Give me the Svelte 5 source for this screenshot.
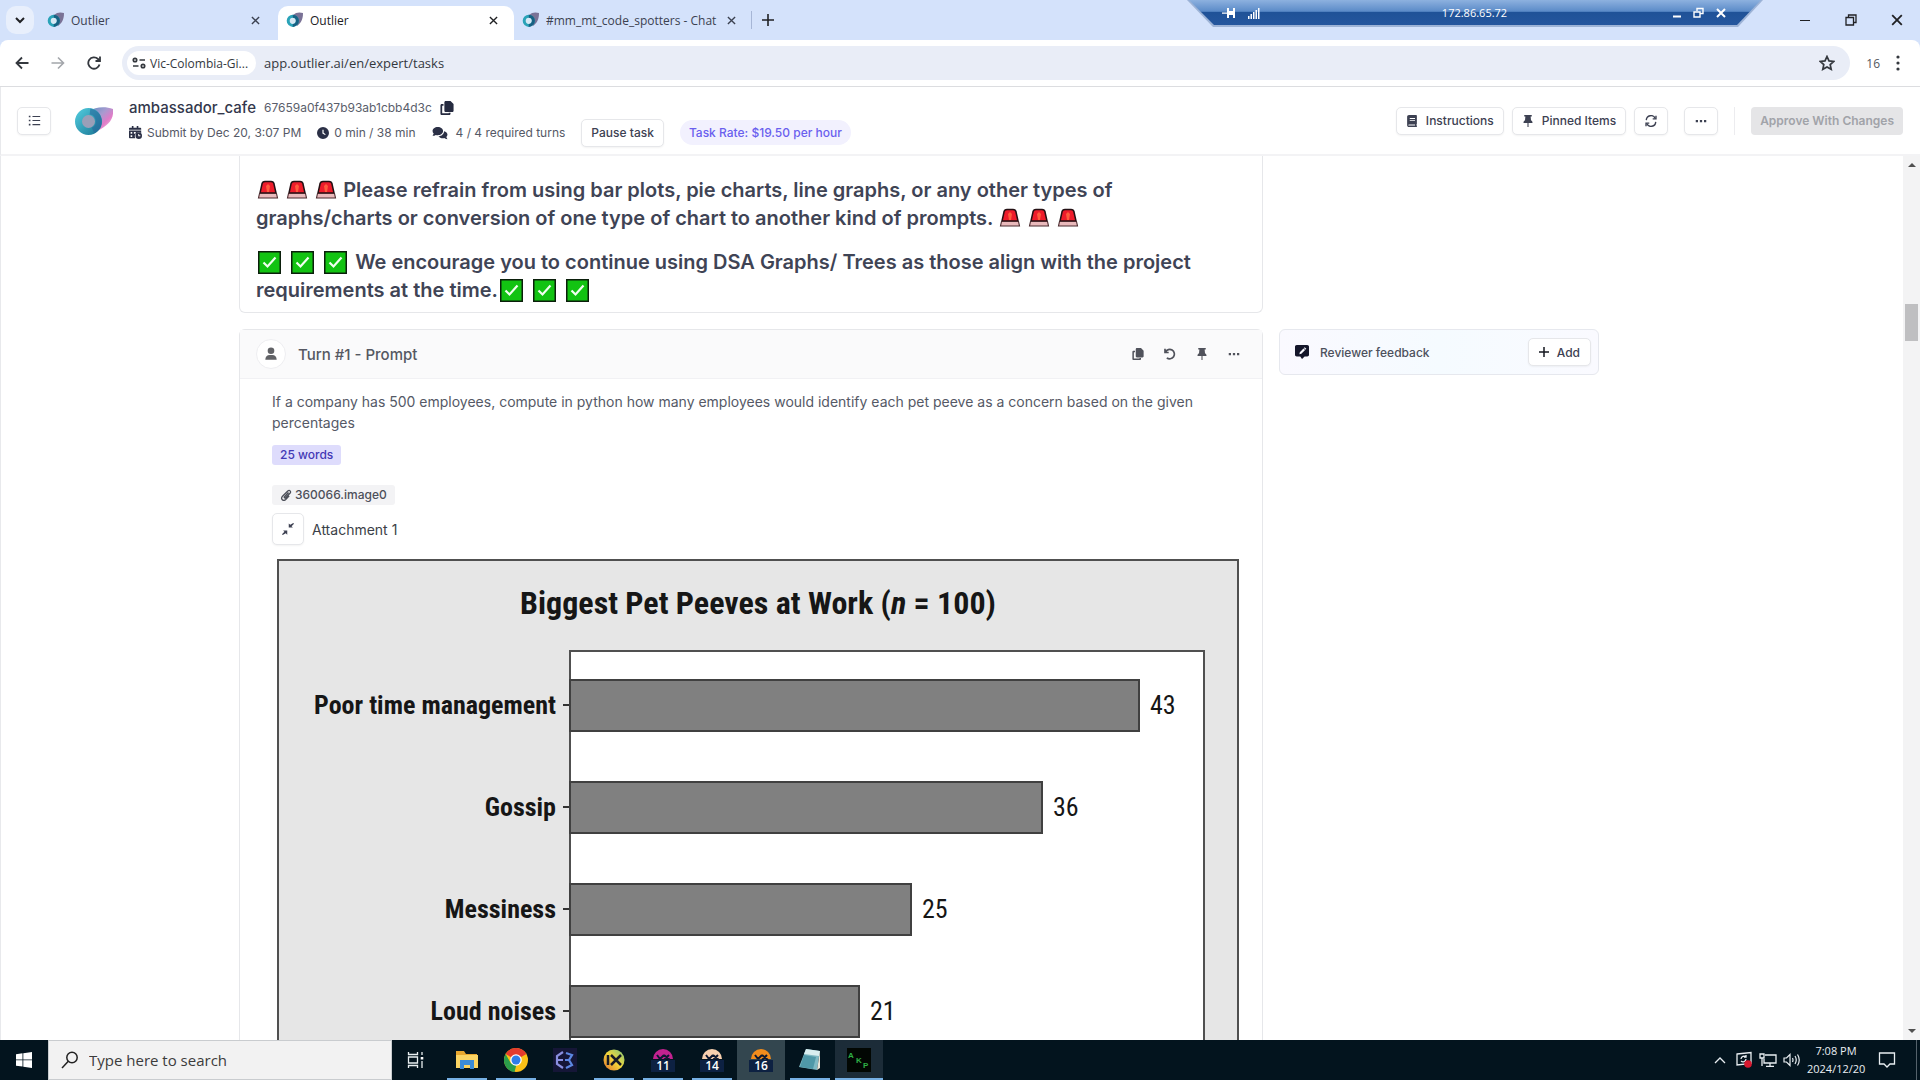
<script>
  const tabs = [
    { title: 'Outlier', active: false },
    { title: 'Outlier', active: true },
    { title: '#mm_mt_code_spotters - Chat', active: false }
  ];

  const bars = [
    { label: 'Poor time management', value: 43, y: 121, width: 569 },
    { label: 'Gossip', value: 36, y: 223, width: 472 },
    { label: 'Messiness', value: 25, y: 325, width: 341 },
    { label: 'Loud noises', value: 21, y: 427, width: 289 }
  ];

  const sessions = [
    { n: 11, color: '#c2228f', current: false },
    { n: 14, color: '#f7cfae', current: false },
    { n: 16, color: '#f28c1c', current: true }
  ];

  const paths = {
    list: 'M1 2h2v2H1zM5.500 2.400h9.500v1.300H5.500zM1 7h2v2H1zM5.500 7.400h9.500v1.300H5.500zM1 12h2v2H1zM5.500 12.400h9.500v1.300H5.500z',
    copy: 'M6.500 0H12l3.500 3.500V11c0 .8-.7 1.500-1.500 1.500H6.500C5.700 12.500 5 11.800 5 11V1.500C5 .7 5.700 0 6.500 0zM2 3.500h2v2H2.500v8.500H10v-.7h2V14.500c0 .8-.7 1.500-1.500 1.500H2c-.8 0-1.500-.7-1.500-1.500V5c0-.8.7-1.500 1.500-1.500z',
    pin: 'M3 0h10v2h-1.500l.5 5c1.300.8 2 1.900 2 3.500H2C2 8.900 2.700 7.800 4 7l.5-5H3zM7.300 10.500h1.400V16H7.300z',
    book: 'M4 0h9.500c.6 0 1 .4 1 1v10.500c0 .4-.2.700-.5.900V14h.5v2H4c-1.500 0-2.500-1-2.500-2.500v-11C1.500 1 2.500 0 4 0zm0 12.500c-1.200 0-1.200 1.500 0 1.500h8v-1.500zM5 4v1.200h7V4zm0 2.500v1.200h7V6.500z',
    user: 'M8 0.500a3.800 3.800 0 1 1 0 7.600 3.800 3.800 0 0 1 0-7.600zM6.500 9h3c3 0 5 2.200 5 5.500H1.500C1.500 11.200 3.500 9 6.500 9z',
    dots: 'M1 6.500h3v3H1zM6.500 6.500h3v3h-3zM12 6.500h3v3h-3z',
    clock: 'M8 0a8 8 0 1 1 0 16A8 8 0 0 1 8 0zM7.200 3.500v5l3.500 2.300.9-1.200-2.800-1.900V3.500z',
    chat: 'M6.500 1C3 1 .5 3 .5 5.700c0 1.200.5 2.200 1.300 3L.5 11.200c1.500 0 2.800-.4 3.700-1 .7.200 1.500.3 2.300.3 3.400 0 6-2.100 6-4.800S9.900 1 6.500 1zM13.600 6c0 3.300-3 5.600-6.400 5.800 1 1.500 3 2.300 5 2.300.6 0 1.200-.1 1.800-.3.8.7 2 1.200 3.500 1.200l-1.300-2.400c.7-.8 1.300-1.700 1.300-2.800 0-1.700-1.500-3.200-3.900-3.800z',
    calendar: 'M3.500 0h2v2h4V0h2v2H14c.6 0 1 .4 1 1v1.500H0V3c0-.6.4-1 1-1h2.500zM0 5.500h15v3.200A5 5 0 0 0 7.700 15H1c-.6 0-1-.4-1-1zM2 7.500v2h2v-2zm4 0v2h1.500l.8-1V7.500zm-4 4v2h2v-2zM12 8a4 4 0 1 1 0 8 4 4 0 0 1 0-8zm-.6 1.700v2.800H14v-1.100h-1.500V9.700z',
    collapse: 'M15 0l1 1-3.200 3.200L14.500 6H9V.5l2 1.700zM1 16l-1-1 3.200-3.200L1.500 10H7v5.500l-2-1.700z',
    feedback: 'M2 0h12c1.100 0 2 .9 2 2v9c0 1.100-.9 2-2 2h-3l-3 3-2-3H2c-1.100 0-2-.9-2-2V2C0 .9.900 0 2 0zm3.500 8.200L5 10.500l2.300-.5 4.200-4.200-1.800-1.800zm4.700-4.700 1.800 1.800.9-.9-1.800-1.800z'
  };
</script>

{#snippet icon(name, size)}
  <svg width={size} height={size} viewBox="0 0 16 16" fill="currentColor" fill-rule="evenodd" aria-hidden="true"><path d={paths[name]} /></svg>
{/snippet}

{#snippet favicon()}
  <svg width="17" height="16" viewBox="0 0 17 16" aria-hidden="true">
    <path d="M7 3C10 0 14 0 17 1c0 6-2 10-6 13z" fill="#7a7296" />
    <circle cx="6.800" cy="8.800" r="4.600" fill="#d7e8f4" stroke="#2aa3b8" stroke-width="3" />
    <path d="M6.800 4.200a4.600 4.600 0 0 1 0 9.200" fill="none" stroke="#176183" stroke-width="3" />
  </svg>
{/snippet}

{#snippet cross(size)}
  <svg width={size} height={size} viewBox="0 0 10 10" fill="none" stroke="currentColor" stroke-width="1.500" aria-hidden="true"><path d="M1 1l8 8M9 1L1 9" /></svg>
{/snippet}

{#snippet siren()}
  <svg class="siren" width="24" height="20" viewBox="0 0 24 20" role="img" aria-label="siren">
    <path d="M6 4Q6.400 1.500 9 1.500h6Q17.600 1.500 18 4l2 9H4z" fill="#ee1c2b" stroke="#241014" stroke-width="1.500" />
    <path d="M10 6l2-2 2 2-1 6h-2z" fill="#ff5b3d" />
    <path d="M3.500 13.500h17l1 4.500h-19z" fill="#e9b9bb" stroke="#4a2a2e" stroke-width="1.100" />
  </svg>
{/snippet}

{#snippet check()}
  <svg class="check" width="28" height="23" viewBox="0 0 28 23" role="img" aria-label="check">
    <rect x="2.750" y=".75" width="21.500" height="21.500" fill="#12c312" stroke="#0b1f0b" stroke-width="1.500" />
    <path d="M7.500 11.500l4 4 8-9" fill="none" stroke="#f1fff0" stroke-width="2.200" />
  </svg>
{/snippet}

<div class="screen">
  <header class="browser">
    <div class="tabstrip">
      <button class="tabmenu" aria-label="Search tabs">
        <svg width="10" height="7" viewBox="0 0 10 7" fill="none" stroke="currentColor" stroke-width="2"><path d="M1 1l4 4 4-4" /></svg>
      </button>
      {#each tabs as tab}
        <div class="tab" class:active={tab.active}>
          {@render favicon()}
          <span class="tabtitle">{tab.title}</span>
          <button class="plain" aria-label="Close tab">{@render cross(9)}</button>
        </div>
      {/each}
      <span class="tabsep"></span>
      <button class="plain newtab" aria-label="New tab">
        <svg width="12" height="12" viewBox="0 0 12 12" stroke="currentColor" stroke-width="1.600"><path d="M6 0v12M0 6h12" /></svg>
      </button>
      <div class="winctl">
        <button class="plain" aria-label="Minimize"><svg width="12" height="12" viewBox="0 0 12 12" stroke="currentColor"><path d="M1 6.500h10" /></svg></button>
        <button class="plain" aria-label="Restore"><svg width="12" height="12" viewBox="0 0 12 12" fill="none" stroke="currentColor" stroke-width="1.300"><path d="M1 3.500h7.500V11H1zM3.500 3.500V1H11v7.500H8.500" /></svg></button>
        <button class="plain" aria-label="Close">{@render cross(12)}</button>
      </div>
    </div>

    <div class="toolbar">
      <button class="plain" aria-label="Back"><svg width="14" height="14" viewBox="0 0 14 14" fill="none" stroke="currentColor" stroke-width="1.800"><path d="M13.500 7H1.500M7 1.500L1.500 7 7 12.500" /></svg></button>
      <button class="plain faded" aria-label="Forward"><svg width="14" height="14" viewBox="0 0 14 14" fill="none" stroke="currentColor" stroke-width="1.600"><path d="M.5 7h12M7 1.500L12.500 7 7 12.500" /></svg></button>
      <button class="plain" aria-label="Reload"><svg width="14" height="14" viewBox="0 0 14 14" fill="none" stroke="currentColor" stroke-width="1.800"><path d="M12.500 8.500A5.700 5.700 0 1 1 11 3L12.500 4.500" /><path d="M13 .5v4.500H8.500" /></svg></button>
      <div class="urlbar">
        <button class="chip">
          <svg width="14" height="12" viewBox="0 0 14 12" fill="none" stroke="currentColor" stroke-width="1.700"><circle cx="3" cy="3" r="1.700" /><path d="M7.500 3H13M1 9h5.500" /><circle cx="11" cy="9" r="1.700" /></svg>
          Vic-Colombia-Gi...
        </button>
        <input class="url" aria-label="Address" value="app.outlier.ai/en/expert/tasks" />
        <button class="plain" aria-label="Bookmark"><svg width="16" height="16" viewBox="0 0 16 16" fill="none" stroke="currentColor" stroke-width="1.700"><path d="M8 1.500l2 4.400 4.800.5-3.600 3.200 1 4.700L8 11.900l-4.200 2.400 1-4.700L1.200 6.400 6 5.900z" /></svg></button>
      </div>
      <span class="profile">16</span>
      <button class="plain" aria-label="Browser menu"><svg width="4" height="16" viewBox="0 0 4 16" fill="currentColor"><circle cx="2" cy="2" r="1.600" /><circle cx="2" cy="8" r="1.600" /><circle cx="2" cy="14" r="1.600" /></svg></button>
    </div>

    <div class="remote">
      <div class="remoteinner">
        <svg width="14" height="12" viewBox="0 0 14 12" fill="currentColor"><path d="M0 5.500h5V1h2v3h4V1h2v10h-2V8H7v3H5V6.700H0z" /></svg>
        <svg width="12" height="12" viewBox="0 0 12 12" fill="currentColor"><path d="M0 9h1.500v3H0zM2.500 7H4v5H2.500zM5 5h1.500v7H5zM7.500 3H9v9H7.500zM10 1h1.500v11H10z" /></svg>
        <span class="ip">172.86.65.72</span>
        <svg width="8" height="12" viewBox="0 0 8 12" fill="currentColor"><path d="M0 8.500h8v2H0z" /></svg>
        <svg width="11" height="12" viewBox="0 0 11 12" fill="none" stroke="currentColor" stroke-width="1.400"><path d="M1 5h6v5H1zM4 4V1.500h6v5H7.500" /></svg>
        <svg width="10" height="10" viewBox="0 0 10 10" fill="none" stroke="currentColor" stroke-width="2"><path d="M1 1l8 8M9 1L1 9" /></svg>
      </div>
    </div>
  </header>

  <section class="taskhead">
    <button class="btn square" aria-label="Task list">{@render icon('list', 13)}</button>
    <svg class="logo" width="38" height="30" viewBox="0 0 38 30" aria-hidden="true">
      <defs>
        <linearGradient id="wing" x1="0" y1="0" x2="1" y2="1"><stop offset="0" stop-color="#5f8fc0" /><stop offset=".4" stop-color="#a79bd0" /><stop offset=".65" stop-color="#e07cc8" /><stop offset="1" stop-color="#f6d3e6" /></linearGradient>
        <linearGradient id="ring" x1="0" y1="0" x2="1" y2="1"><stop offset="0" stop-color="#4cc3d6" /><stop offset="1" stop-color="#1f7f9c" /></linearGradient>
      </defs>
      <path d="M14 5C20 1 30 0 38 3c1 10-4 16-16 22z" fill="url(#wing)" />
      <circle cx="13.500" cy="15.500" r="10" fill="#9a9fb8" stroke="url(#ring)" stroke-width="7" />
      <path d="M15 5.500a10 10 0 0 1 3 19" fill="none" stroke="#28659a" stroke-width="6" opacity=".55" />
    </svg>
    <div class="taskinfo">
      <div class="line">
        <h1>ambassador_cafe</h1>
        <span class="taskid">67659a0f437b93ab1cbb4d3c</span>
        <button class="plain dark" aria-label="Copy task id">{@render icon('copy', 14)}</button>
      </div>
      <div class="line second">
        <span class="meta">{@render icon('calendar', 13)} Submit by Dec 20, 3:07 PM</span>
        <span class="meta">{@render icon('clock', 12)} 0 min / 38 min</span>
        <span class="meta turns"><svg width="16" height="14" viewBox="0 0 18 16" fill="currentColor"><path d={paths.chat} /></svg> 4 / 4 required turns</span>
        <button class="btn">Pause task</button>
        <span class="rate">Task Rate: $19.50 per hour</span>
      </div>
    </div>
    <div class="actions">
      <button class="btn">{@render icon('book', 12)} Instructions</button>
      <button class="btn">{@render icon('pin', 12)} Pinned Items</button>
      <button class="btn square" aria-label="Refresh">
        <svg width="12" height="12" viewBox="0 0 14 14" fill="none" stroke="currentColor" stroke-width="1.600"><path d="M1.500 6A5.500 5.500 0 0 1 12 4M12.500 8A5.500 5.500 0 0 1 2 10" /><path d="M12.800.8v3.700H9M1.200 13.200V9.500H5" /></svg>
      </button>
      <button class="btn square more" aria-label="More">{@render icon('dots', 12)}</button>
      <span class="vline"></span>
      <button class="approve" disabled>Approve With Changes</button>
    </div>
  </section>

  <main>
    <div class="content">
      <div class="feed">
        <article class="card notice">
          <p>{@render siren()} {@render siren()} {@render siren()} Please refrain from using bar plots, pie charts, line graphs, or any other types of graphs/charts or conversion of one type of chart to another kind of prompts. {@render siren()} {@render siren()} {@render siren()}</p>
          <p>{@render check()} {@render check()} {@render check()} We encourage you to continue using DSA Graphs/ Trees as those align with the project requirements at the time.{@render check()} {@render check()} {@render check()}</p>
        </article>

        <article class="card turn">
          <header class="turnhead">
            <span class="avatar">{@render icon('user', 14)}</span>
            <h2>Turn #1 - Prompt</h2>
            <div class="tools">
              <button class="plain" aria-label="Copy">{@render icon('copy', 12)}</button>
              <button class="plain" aria-label="Undo"><svg width="12" height="12" viewBox="0 0 12 12" fill="none" stroke="currentColor" stroke-width="1.700"><path d="M1 .8v3.700h3.700M1.500 4A4.700 4.700 0 1 1 2.800 9.800" /></svg></button>
              <button class="plain" aria-label="Pin">{@render icon('pin', 12)}</button>
              <button class="plain" aria-label="More">{@render icon('dots', 12)}</button>
            </div>
          </header>
          <div class="turnbody">
            <p class="prompt">If a company has 500 employees, compute in python how many employees would identify each pet peeve as a concern based on the given percentages</p>
            <span class="words">25 words</span>
            <a class="file" href="#attachment">
              <svg width="12" height="12" viewBox="0 0 12 12" fill="none" stroke="currentColor" stroke-width="1.300"><path d="M8.500 3.500L4.500 7.700c-.7.800.3 1.800 1.100 1l4.300-4.400C11.500 2.500 9.500.4 7.800 2L2.500 7.300c-2.300 2.500.7 5.500 3.200 3.200l3.500-3.600" /></svg>
              360066.image0
            </a>
            <div class="attach">
              <button class="btn fold" aria-label="Collapse attachment">{@render icon('collapse', 12)}</button>
              <span>Attachment 1</span>
            </div>
            <svg class="chart" id="attachment" viewBox="0 0 964 620" role="img" aria-label="Biggest Pet Peeves at Work">
              <rect x="2" y="2" width="960" height="640" fill="#e6e6e6" stroke="#505050" stroke-width="2" />
              <text class="charttitle" x="482" y="56" text-anchor="middle">Biggest Pet Peeves at Work (<tspan class="ital">n</tspan> = 100)</text>
              <rect x="294" y="93" width="634" height="600" fill="#fff" stroke="#505050" stroke-width="2" />
              {#each bars as bar}
                <text class="barlabel" x="280" y={bar.y + 35} text-anchor="end">{bar.label}</text>
                <path d="M287 {bar.y + 26}h7" stroke="#333" stroke-width="2" />
                <rect x="294" y={bar.y + 1} width={bar.width} height="51" fill="#808080" stroke="#404040" stroke-width="2" />
                <text class="barvalue" x={bar.width + 305} y={bar.y + 35}>{bar.value}</text>
              {/each}
            </svg>
          </div>
        </article>
      </div>

      <aside class="feedback">
        {@render icon('feedback', 14)}
        <span class="fbtext">Reviewer feedback</span>
        <button class="btn add"><svg width="10" height="10" viewBox="0 0 10 10" stroke="#15171f" stroke-width="1.500"><path d="M5 0v10M0 5h10" /></svg> Add</button>
      </aside>
    </div>
    <div class="scrollbar">
      <svg width="8" height="5" viewBox="0 0 8 5"><path d="M0 5l4-4 4 4z" fill="#505050" /></svg>
      <span class="thumb"></span>
      <svg width="8" height="5" viewBox="0 0 8 5"><path d="M0 0l4 4 4-4z" fill="#505050" /></svg>
    </div>
  </main>

  <footer class="taskbar">
    <button class="start" aria-label="Start"><svg width="16" height="16" viewBox="0 0 16 16" fill="#fff"><path d="M0 2.200L6.500 1.300v6.200H0zM7.300 1.200L16 0v7.500H7.300zM0 8.300h6.500v6.300L0 13.700zM7.300 8.300H16V16l-8.700-1.200z" /></svg></button>
    <label class="search">
      <svg width="18" height="18" viewBox="0 0 18 18" fill="none" stroke="#222" stroke-width="1.500"><circle cx="11" cy="6.500" r="5.200" /><path d="M7.300 10.200L1 17" /></svg>
      <input aria-label="Search" placeholder="Type here to search" />
    </label>
    <div class="apps">
      <button class="app" aria-label="Task view"><svg width="18" height="18" viewBox="0 0 18 18" fill="none" stroke="#e8eef0" stroke-width="1.300"><path d="M1.500 1v2.500h9V1M1.500 17v-2.500h9V17M1.500 6h9v6h-9zM15 1v3M15 10v7" /><path d="M13.700 6h2.600v2.500h-2.600z" fill="#fff" stroke="none" /></svg></button>
      <button class="app run" aria-label="File Explorer"><svg width="24" height="22" viewBox="0 0 24 22"><path d="M1 2h8l2 3h11v14H1z" fill="#e8a72f" /><path d="M1 6h22v13H1z" fill="#fbd463" /><path d="M5 11h14v9h-4v-4H9v4H5z" fill="#3b8bd8" /></svg></button>
      <button class="app run" aria-label="Chrome"><svg width="24" height="24" viewBox="0 0 24 24"><circle cx="12" cy="12" r="12" fill="#fbc116" /><path d="M12 12L1.600 6A12 12 0 0 1 22.400 6z" fill="#e33b2e" /><path d="M1.600 6L7 15.500l5.500 1L10.500 24A12 12 0 0 1 1.600 6z" fill="#2a9d4a" /><circle cx="12" cy="12" r="5.800" fill="#fff" /><circle cx="12" cy="12" r="4.500" fill="#2f7de9" /></svg></button>
      <button class="app" aria-label="EB"><svg width="24" height="24" viewBox="0 0 24 24" fill="none"><path d="M0 0h24v24H0z" fill="#151637" /><path d="M10 4L4 8v8l6 4M4 12h6" stroke="#8a8fe0" stroke-width="2.200" /><path d="M13 5l6 2-3 5 3 5-6 3M12 12h5" stroke="#5c87e2" stroke-width="2.200" /></svg></button>
      <button class="app run" aria-label="IX"><svg width="22" height="22" viewBox="0 0 22 22" fill="none"><defs><linearGradient id="ix" x1="0" y1="1" x2="1" y2="0"><stop offset="0" stop-color="#e0702d" /><stop offset=".5" stop-color="#f3d63b" /><stop offset="1" stop-color="#7cc67c" /></linearGradient></defs><circle cx="11" cy="11" r="10.500" fill="url(#ix)" /><path d="M5 6v10M8 6l10 10M18 6L8 16" stroke="#171a26" stroke-width="2.500" /></svg></button>
      {#each sessions as session}
        <button class="app run" class:current={session.current} aria-label="Session {session.n}"><svg width="24" height="24" viewBox="0 0 24 24"><path d="M2 11a10 10 0 0 1 20 0z" fill={session.color} /><path d="M6 7l3 4M9 11l4-4M13 7l6 5M18 7l-5 5" stroke="#0b1730" stroke-width="2" /><path d="M0 12h24v12H0z" fill="#0d2142" /><text class="num" x="12" y="22" text-anchor="middle">{session.n}</text></svg></button>
      {/each}
      <button class="app run" aria-label="Notepad"><svg width="24" height="24" viewBox="0 0 24 24"><path d="M8 1l14 2-3 19L1 19z" fill="#7fb9c4" /><path d="M8 1l14 2-1 5L6 6z" fill="#d9eef0" /><path d="M6 7l12 2-3 12-13-2z" fill="#4f98a8" /><path d="M22 3v17l-3 2z" fill="#e8e4d8" /></svg></button>
      <button class="app run lit" aria-label="AKP"><svg width="24" height="24" viewBox="0 0 24 24"><path d="M0 0h24v24H0z" fill="#020703" /><text class="akp" x="1" y="10">A</text><text class="akp" x="9" y="15">K</text><text class="akp" x="16" y="20">P</text></svg></button>
    </div>
    <div class="tray">
      <svg width="12" height="8" viewBox="0 0 12 8" fill="none" stroke="currentColor" stroke-width="1.300"><path d="M1 7l5-5 5 5" /></svg>
      <svg width="18" height="18" viewBox="0 0 18 18" fill="none" stroke="currentColor" stroke-width="1.300"><path d="M2 3l14-1.500v11L2 14zM6 8a3 3 0 0 1 5-2M11 8a3 3 0 0 1-5 2M11 4v2H9" /><circle cx="13" cy="13" r="3.800" fill="#d8182f" stroke="none" /></svg>
      <svg width="18" height="16" viewBox="0 0 18 16" fill="none" stroke="currentColor" stroke-width="1.300"><path d="M6 3h11v8H5V7M11 11v3M7 14.300h8M1 2h4v4H1zM3 6v8" /></svg>
      <svg width="18" height="16" viewBox="0 0 18 16" fill="none" stroke="currentColor" stroke-width="1.200"><path d="M1 6h2.500L7 2.500v11L3.500 10H1zM9.500 6q1 2 0 4M12 4q2.500 4 0 8M14.500 2.500q3.500 5.500 0 11" /></svg>
      <time>7:08 PM<br />2024/12/20</time>
      <svg width="18" height="18" viewBox="0 0 18 18" fill="none" stroke="currentColor" stroke-width="1.300"><path d="M1.500 2h15v11H12l-3 3-3-3H1.500z" /></svg>
      <span class="peek"></span>
    </div>
  </footer>
</div>

<style>
  :global(body) { margin: 0; }
  * { box-sizing: border-box; }
  svg { flex: none; }
  button, input { font: inherit; color: inherit; }
  h1, h2, p { margin: 0; }

  .screen {
    display: flex;
    flex-direction: column;
    height: 100vh;
    overflow: hidden;
    background: #fff;
    font-family: Inter, 'Liberation Sans', sans-serif;
    color: #3d4152;
  }
  .plain {
    display: flex;
    align-items: center;
    justify-content: center;
    padding: 0;
    border: 0;
    background: none;
  }

  /* browser chrome */
  .browser {
    position: relative;
    font-family: 'Open Sans', 'Noto Sans', sans-serif;
    background: #d4e2fb;
    color: #202124;
  }
  .tabstrip { display: flex; height: 40px; padding: 0 17px 0 6px; font-size: 12px; }
  .tabmenu {
    display: flex;
    align-items: center;
    justify-content: center;
    width: 28px;
    height: 28px;
    margin: 6px 8px 0 0;
    padding: 0;
    border: 0;
    border-radius: 10px;
    background: #e8effc;
  }
  .tab {
    display: flex;
    align-items: center;
    gap: 7px;
    width: 236px;
    height: 28px;
    margin-top: 6px;
    padding: 0 14px 0 8px;
    border-radius: 10px 10px 0 0;
    color: #3b4150;
  }
  .tab.active { height: 34px; padding: 0 16px 6px 8px; background: #fff; color: #202124; }
  .tab:first-of-type { padding: 0 18px 0 5px; }
  .tabtitle { flex: 1; overflow: hidden; white-space: nowrap; }
  .tabsep { width: 1px; height: 18px; margin: 11px 10px 0 1px; background: #a6b6d6; }
  .newtab { height: 40px; }
  .winctl { display: flex; gap: 34px; margin-left: auto; height: 40px; }

  .toolbar {
    display: flex;
    align-items: center;
    gap: 20px;
    height: 47px;
    padding: 0 20px 0 14px;
    border-bottom: 1px solid #dcdde0;
    border-radius: 8px 8px 0 0;
    background: #fff;
    color: #34383e;
  }
  .toolbar > .plain { width: 16px; }
  .toolbar > .plain:last-child { width: 4px; }
  .toolbar > .faded { color: #a3a6ab; }
  .urlbar {
    display: flex;
    align-items: center;
    flex: 1;
    height: 34px;
    padding: 0 15px 0 5px;
    border-radius: 17px;
    background: #e9edf7;
  }
  .chip {
    display: flex;
    align-items: center;
    gap: 4px;
    height: 24px;
    padding: 0 8px 0 5px;
    border: 0;
    border-radius: 12px;
    background: #fff;
    font-size: 12px;
  }
  .url { flex: 1; margin-left: 8px; padding: 0; border: 0; background: none; font-size: 13px; outline: 0; }
  .profile { font-size: 12px; color: #55585e; margin: 0 -4px; }

  .remote {
    position: absolute;
    top: 0;
    left: 1187px;
    width: 576px;
    height: 27px;
    background: #9db3d6;
    clip-path: polygon(0 0, 100% 0, 551px 100%, 26px 100%);
  }
  .remoteinner {
    display: flex;
    align-items: center;
    gap: 12px;
    height: 25px;
    padding: 0 37px 0 35px;
    background: linear-gradient(#8db1df, #5b8bc8 45%, #1f5298 50%, #25569d);
    clip-path: polygon(2px 0, 574px 0, 550px 100%, 27px 100%);
    color: #fff;
    font-size: 11px;
  }
  .ip { flex: 1; padding-left: 16px; text-align: center; }

  /* task header */
  .taskhead {
    display: flex;
    align-items: center;
    height: 69px;
    padding: 0 17px 0 16px;
    border-bottom: 2px solid #f3f3f5;
    border-left: 1px solid #e8e9ec;
  }
  .btn {
    display: inline-flex;
    align-items: center;
    justify-content: center;
    gap: 8px;
    height: 28px;
    padding: 0 9px;
    border: 1px solid #e6e7ea;
    border-radius: 5px;
    background: #fff;
    box-shadow: 0 1px 2px #0000000d;
    font-size: 12px;
    font-weight: 500;
    color: #3d4152;
    white-space: nowrap;
  }
  .square { width: 34px; padding: 0; }
  .logo { margin: 0 16px 0 24px; }
  .taskinfo { display: flex; flex-direction: column; padding-top: 2px; }
  .line { display: flex; align-items: center; height: 22px; }
  .line.second { height: 28px; gap: 16px; }
  h1 { font-size: 15px; font-weight: 500; color: #33384c; margin-right: 8px; }
  .taskid { font-size: 12px; margin-right: 8px; color: #5a5e6b; }
  .dark { color: #262b40; }
  .meta { display: flex; align-items: center; gap: 5px; font-size: 12px; color: #555966; white-space: nowrap; }
  .meta :global(svg) { color: #2b3046; }
  .turns { gap: 8px; }
  .rate {
    padding: 0 9px;
    border-radius: 13px;
    background: #f2f1fe;
    color: #6a5fee;
    font-size: 12px;
    font-weight: 500;
    line-height: 25px;
    white-space: nowrap;
  }
  .actions { display: flex; align-items: center; gap: 8px; margin-left: auto; }
  .more { margin-left: 8px; }
  .vline { width: 1px; height: 28px; margin: 0 8px; background: #ececef; }
  .approve {
    height: 28px;
    padding: 0 9px;
    border: 0;
    border-radius: 4px;
    background: #e5e5e7;
    color: #a1a3a9;
    font-size: 12px;
    font-weight: 600;
  }

  /* page */
  main { display: flex; flex: 1; min-height: 0; overflow: hidden; }
  .content {
    display: grid;
    grid-template-columns: minmax(0, 1fr) 320px;
    gap: 16px;
    flex: 1;
    padding: 0 304px 0 238px;
    border-left: 1px solid #e8e9ec;
    align-items: start;
  }
  .feed { display: flex; flex-direction: column; gap: 16px; }
  .card { border: 1px solid #e6e7ea; border-radius: 6px; }
  .notice {
    padding: 20px 60px 8px 16px;
    border-top: 0;
    border-radius: 0 0 6px 6px;
    font-size: 20px;
    line-height: 28px;
    font-weight: 600;
    color: #3f4455;
  }
  .notice p + p { margin-top: 16px; }
  .siren { vertical-align: -3px; }
  .check { vertical-align: -5px; }
  .turnhead {
    display: flex;
    align-items: center;
    gap: 12px;
    height: 49px;
    padding: 0 22px 0 16px;
    border-bottom: 1px solid #f1f1f4;
    background: #fafafb;
  }
  .avatar {
    display: flex;
    align-items: center;
    justify-content: center;
    width: 30px;
    height: 30px;
    border: 1px solid #eeeef1;
    border-radius: 50%;
    background: #fff;
    color: #616266;
  }
  h2 { font-size: 15px; font-weight: 500; color: #555862; }
  .tools { display: flex; gap: 20px; margin-left: auto; color: #50525b; }
  .turnbody { display: flex; flex-direction: column; align-items: flex-start; padding: 12px 22px 0 32px; }
  .prompt { font-size: 14px; line-height: 21px; color: #555966; }
  .words, .file {
    padding: 0 8px;
    border-radius: 3px;
    font-size: 12px;
    line-height: 20px;
  }
  .words { margin-top: 12px; background: #dedcfc; color: #4338b5; font-weight: 500; }
  .file { display: flex; align-items: center; gap: 3px; margin-top: 20px; background: #f3f3f5; color: #4d505a; font-weight: 500; text-decoration: none; }
  .attach { display: flex; align-items: center; gap: 8px; margin-top: 8px; font-size: 14px; color: #3c3f48; }
  .fold { width: 32px; height: 32px; padding: 0; }
  .chart { width: calc(100% - 4px); margin: 13px 0 0 4px; }
  .chart text { font-family: 'Roboto Condensed', 'Liberation Sans Narrow', 'Liberation Sans', sans-serif; fill: #161616; }
  .charttitle { font-size: 32px; font-weight: 700; }
  .ital { font-style: italic; }
  .barlabel { font-size: 26px; font-weight: 700; }
  .barvalue { font-size: 26px; }

  .feedback {
    display: flex;
    align-items: center;
    height: 46px;
    margin-top: 173px;
    padding: 0 7px 0 15px;
    border: 1px solid #e6e8ee;
    border-radius: 6px;
    background: linear-gradient(90deg, #faf9ff, #f5fbff 50%, #fafaff);
    color: #14162a;
  }
  .fbtext { flex: 1; margin-left: 11px; font-size: 12px; font-weight: 500; color: #4d505c; }
  .add { padding: 0 10px; }

  .scrollbar {
    display: flex;
    flex-direction: column;
    align-items: center;
    width: 17px;
    padding: 6px 0;
    background: #f3f3f4;
  }
  .thumb { width: 13px; height: 37px; margin: 137px 0 auto; background: #bfbfc1; }

  /* taskbar */
  .taskbar {
    display: flex;
    height: 40px;
    background: #03141e;
    font-family: 'Open Sans', 'Noto Sans', sans-serif;
    color: #e9eef2;
  }
  .start { width: 48px; padding: 0; border: 0; background: none; display: flex; align-items: center; justify-content: center; }
  .search {
    display: flex;
    align-items: center;
    gap: 10px;
    width: 344px;
    padding: 0 12px;
    border: 1px solid #c9cccf;
    background: #f2f2f2;
  }
  .search input { flex: 1; min-width: 0; padding: 0; border: 0; background: none; font-size: 15px; outline: 0; }
  .search input::placeholder { color: #3c3c3c; opacity: 1; }
  .apps { display: flex; gap: 1px; }
  .app {
    display: flex;
    align-items: center;
    justify-content: center;
    width: 48px;
    padding: 0;
    border: 0;
    background: linear-gradient(#76b0e4, #76b0e4) center bottom / 0 2px no-repeat;
  }
  .app:first-child { margin-right: 2px; }
  .app.run { background-size: 40px 2px; }
  .app.current { background-color: #33464f; background-size: 0 2px; }
  .app.lit { background-color: #1c2c38; background-size: 48px 2px; }
  .num { font: 600 12px 'Open Sans', sans-serif; fill: #fff; }
  .akp { font: 700 8px 'Liberation Sans', sans-serif; fill: #2fae46; }
  .tray { display: flex; align-items: center; gap: 6px; margin-left: auto; }
  .tray > svg:first-child { margin-right: 3px; }
  time { width: 58px; text-align: center; font-size: 11px; line-height: 18px; white-space: nowrap; }
  time + svg { margin-left: 7px; }
  .peek { width: 4px; height: 40px; margin-left: 14px; border-left: 1px solid #55626b; }
</style>
